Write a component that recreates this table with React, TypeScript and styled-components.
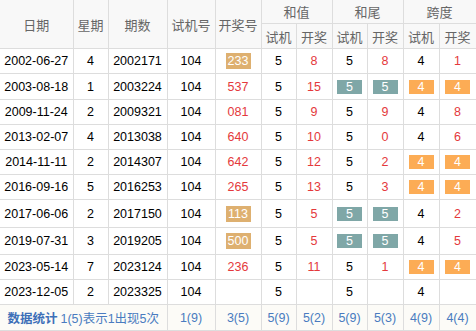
import styled, { createGlobalStyle } from "styled-components";

const GlobalStyle = createGlobalStyle`
  html, body {
    margin: 0;
    padding: 0;
    background: #fff;
  }
  body {
    font-family: "Liberation Sans", Arial, "Noto Sans CJK SC", sans-serif;
  }
`;

type Tone = "plain" | "red" | "tan" | "teal" | "orange";
type Cell = { v: string; t?: Tone };

const Table = styled.table`
  border-collapse: collapse;
  table-layout: fixed;
  width: 476px;
  font-size: 12px;
  color: #000;

  td, th {
    border: 1px solid #ddd;
    padding: 0;
    text-align: center;
    vertical-align: middle;
    overflow: hidden;
    white-space: nowrap;
  }
  tr > *:first-child {
    border-left: 0;
  }
  thead tr:first-child th {
    border-top: 0;
  }
`;

const Head = styled.th<{ $h: number }>`
  height: ${(p) => p.$h}px;
  background: #f8f8f8;
  color: #666;
  font-weight: normal;
  font-size: 13px;
`;

const Row = styled.tr<{ $h: number }>`
  height: ${(p) => p.$h}px;
`;

const Td = styled.td<{ $red?: boolean }>`
  color: ${(p) => (p.$red ? "#e4393c" : "#000")};
  font-size: 12.5px;
`;

const Badge = styled.span<{ $bg: string; $big?: boolean }>`
  display: inline-block;
  width: 25px;
  height: ${(p) => (p.$big ? 16 : 14)}px;
  line-height: ${(p) => (p.$big ? 16 : 14)}px;
  background: ${(p) => p.$bg};
  color: #fff;
  font-size: 12.5px;
  vertical-align: middle;
`;

const Foot = styled.td`
  background: #fcfbf7;
  color: #4a7bc0;
  font-size: 12.5px;
  height: 25px;
`;

const FootLabel = styled.b`
  font-weight: bold;
  color: #3d6fb8;
  margin-right: 3px;
`;

const badgeColor: Record<string, string> = {
  tan: "#deb070",
  teal: "#7fa7a7",
  orange: "#fcac55",
};

const p = (v: string, t: Tone = "plain"): Cell => ({ v, t });

const rows: { h: number; c: Cell[] }[] = [
  { h: 25, c: [p("2002-06-27"), p("4"), p("2002171"), p("104"), p("233", "tan"), p("5"), p("8", "red"), p("5"), p("8", "red"), p("4"), p("1", "red")] },
  { h: 26, c: [p("2003-08-18"), p("1"), p("2003224"), p("104"), p("537", "red"), p("5"), p("15", "red"), p("5", "teal"), p("5", "teal"), p("4", "orange"), p("4", "orange")] },
  { h: 25, c: [p("2009-11-24"), p("2"), p("2009321"), p("104"), p("081", "red"), p("5"), p("9", "red"), p("5"), p("9", "red"), p("4"), p("8", "red")] },
  { h: 25, c: [p("2013-02-07"), p("4"), p("2013038"), p("104"), p("640", "red"), p("5"), p("10", "red"), p("5"), p("0", "red"), p("4"), p("6", "red")] },
  { h: 25, c: [p("2014-11-11"), p("2"), p("2014307"), p("104"), p("642", "red"), p("5"), p("12", "red"), p("5"), p("2", "red"), p("4", "orange"), p("4", "orange")] },
  { h: 25, c: [p("2016-09-16"), p("5"), p("2016253"), p("104"), p("265", "red"), p("5"), p("13", "red"), p("5"), p("3", "red"), p("4", "orange"), p("4", "orange")] },
  { h: 28, c: [p("2017-06-06"), p("2"), p("2017150"), p("104"), p("113", "tan"), p("5"), p("5", "red"), p("5", "teal"), p("5", "teal"), p("4"), p("2", "red")] },
  { h: 27, c: [p("2019-07-31"), p("3"), p("2019205"), p("104"), p("500", "tan"), p("5"), p("5", "red"), p("5", "teal"), p("5", "teal"), p("4"), p("5", "red")] },
  { h: 25, c: [p("2023-05-14"), p("7"), p("2023124"), p("104"), p("236", "red"), p("5"), p("11", "red"), p("5"), p("1", "red"), p("4", "orange"), p("4", "orange")] },
  { h: 25, c: [p("2023-12-05"), p("2"), p("2023325"), p("104"), p(""), p("5"), p(""), p("5"), p(""), p("4"), p("")] },
];

const widths = [73, 35, 59, 48, 46, 35, 36, 35, 36, 36, 37];
const footStats = ["1(9)", "3(5)", "5(9)", "5(2)", "5(9)", "5(3)", "4(9)", "4(4)"];

function renderCell(c: Cell, i: number) {
  if (c.t === "tan" || c.t === "teal" || c.t === "orange") {
    return (
      <Td key={i}>
        <Badge $bg={badgeColor[c.t]} $big={c.t === "tan"}>{c.v}</Badge>
      </Td>
    );
  }
  return <Td key={i} $red={c.t === "red"}>{c.v}</Td>;
}

export default function App() {
  return (
    <>
      <GlobalStyle />
      <Table>
        <colgroup>
          {widths.map((w, i) => (
            <col key={i} style={{ width: w }} />
          ))}
        </colgroup>
        <thead>
          <tr>
            <Head $h={23} rowSpan={2}>日期</Head>
            <Head $h={23} rowSpan={2}>星期</Head>
            <Head $h={23} rowSpan={2}>期数</Head>
            <Head $h={23} rowSpan={2}>试机号</Head>
            <Head $h={23} rowSpan={2}>开奖号</Head>
            <Head $h={23} colSpan={2}>和值</Head>
            <Head $h={23} colSpan={2}>和尾</Head>
            <Head $h={23} colSpan={2}>跨度</Head>
          </tr>
          <tr>
            {["试机", "开奖", "试机", "开奖", "试机", "开奖"].map((t, i) => (
              <Head $h={24} key={i}>{t}</Head>
            ))}
          </tr>
        </thead>
        <tbody>
          {rows.map((r, i) => (
            <Row $h={r.h} key={i}>
              {r.c.map(renderCell)}
            </Row>
          ))}
          <tr>
            <Foot colSpan={3}>
              <FootLabel>数据统计</FootLabel>1(5)表示1出现5次
            </Foot>
            {footStats.map((s, i) => (
              <Foot key={i}>{s}</Foot>
            ))}
          </tr>
        </tbody>
      </Table>
    </>
  );
}
